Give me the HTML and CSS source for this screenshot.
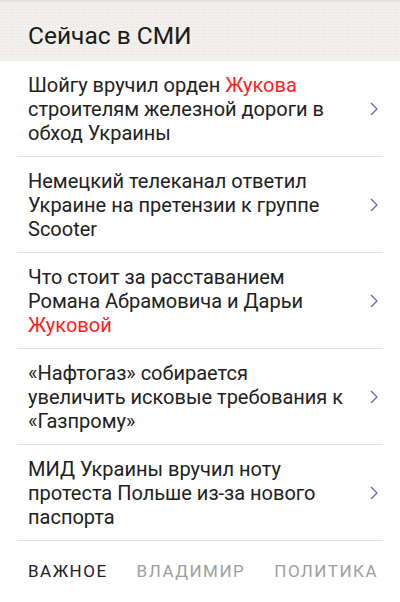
FILE: index.html
```html
<!DOCTYPE html>
<html lang="ru">
<head>
  <meta charset="UTF-8" />
  <meta name="viewport" content="width=device-width, initial-scale=1.0"/>
  <title>Сейчас в СМИ</title>
  <link rel="stylesheet" href="styles.css">
</head>
<body>

<div class="header">
  <h1>Сейчас в СМИ</h1>
</div>

<ul class="news-list">
  <li class="news-item">
    <span class="news-text">Шойгу вручил орден <em>Жукова</em> строителям железной дороги в обход Украины</span>
    <svg class="chevron" width="8" height="14" viewBox="0 0 8 14"><path d="M1 1 L7 7 L1 13" /></svg>
  </li>
  <li class="news-item">
    <span class="news-text">Немецкий телеканал ответил Украине на претензии к группе Scooter</span>
    <svg class="chevron" width="8" height="14" viewBox="0 0 8 14"><path d="M1 1 L7 7 L1 13" /></svg>
  </li>
  <li class="news-item">
    <span class="news-text">Что стоит за расставанием Романа Абрамовича и Дарьи <em>Жуковой</em></span>
    <svg class="chevron" width="8" height="14" viewBox="0 0 8 14"><path d="M1 1 L7 7 L1 13" /></svg>
  </li>
  <li class="news-item">
    <span class="news-text">«Нафтогаз» собирается увеличить исковые требования к «Газпрому»</span>
    <svg class="chevron" width="8" height="14" viewBox="0 0 8 14"><path d="M1 1 L7 7 L1 13" /></svg>
  </li>
  <li class="news-item">
    <span class="news-text">МИД Украины вручил ноту протеста Польше из-за нового паспорта</span>
    <svg class="chevron" width="8" height="14" viewBox="0 0 8 14"><path d="M1 1 L7 7 L1 13" /></svg>
  </li>
</ul>

<div class="tabs">
  <span class="tab active">Важное</span>
  <span class="tab">Владимир</span>
  <span class="tab">Политика</span>
</div>

</body>
</html>
```

FILE: styles.css
```css
html, body {
  margin: 0;
  padding: 0;
  background: white;
  color: #212121;
  font-family: Roboto, "Noto Sans", sans-serif;
  height: 100%;
  overflow: hidden;
}

.header {
  height: 61px;
  box-sizing: border-box;
  border-top: 2px solid #e4e2de;
  background-color: #f2f0ec;
  background-image: radial-gradient(circle, #e6e3de 0.7px, transparent 0.8px);
  background-size: 3px 3px;
  display: flex;
  align-items: center;
  padding-left: 28px;
}

.header h1 {
  margin: 0;
  margin-top: 7px;
  font-size: 24.5px;
  font-weight: normal;
  color: #1a1a1a;
}

.news-list {
  list-style: none;
  margin: 0;
  padding: 0;
}

.news-item {
  height: 95px;
  display: flex;
  align-items: center;
  border-bottom: 1px solid #e2e2e2;
  margin: 0 17px;
  padding-left: 11px;
  padding-right: 5px;
}

.news-text {
  flex: 1;
  margin-right: 24px;
  font-size: 20px;
  line-height: 24px;
}

.news-text em {
  font-style: normal;
  color: #ff1d1d;
}

.chevron {
  flex: none;
  fill: none;
  stroke: #6c62b4;
  stroke-width: 1.3;
}

.tabs {
  display: flex;
  gap: 29px;
  padding: 20px 0 0 28px;
}

.tab {
  font-size: 17px;
  letter-spacing: 1.5px;
  text-transform: uppercase;
  color: #9e9e9e;
}

.tab.active {
  color: #212121;
}
```
